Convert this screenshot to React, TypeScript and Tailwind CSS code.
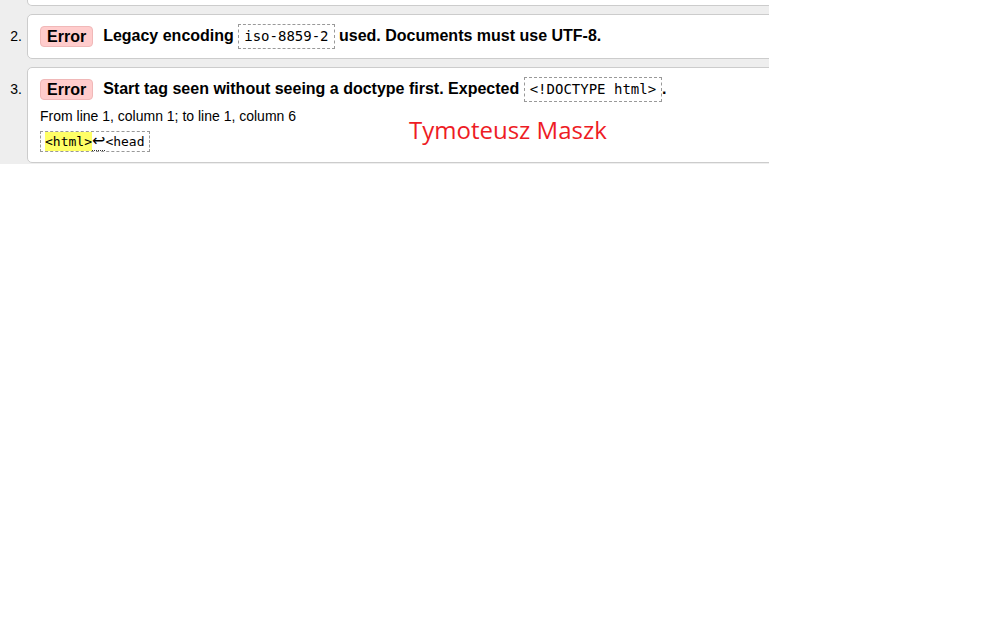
const sans = "font-['Liberation_Sans',Arial,sans-serif]";
const mono = "font-['DejaVu_Sans_Mono',monospace]";

function Badge() {
  return (
    <span className="inline-block rounded-[4px] border border-[#f0b8b8] bg-[#ffcccc] px-[6px] text-[16px] font-bold leading-[19px] text-black">
      Error
    </span>
  );
}

function Code({ children }: { children: React.ReactNode }) {
  return (
    <code
      className={`inline-block border border-dashed border-[#999] px-[5px] text-[14px] font-normal leading-[23px] text-black ${mono}`}
    >
      {children}
    </code>
  );
}

export default function App() {
  return (
    <div className={`relative h-[164px] w-[769px] overflow-hidden bg-[#eeeeee] ${sans}`}>
      <ol className="flex w-[900px] flex-col gap-[8px] text-black">
        <li className="flex">
          <span className="w-[27px] shrink-0" />
          <div className="h-[6px] flex-1 rounded-b-[5px] border border-t-0 border-[#cccccc] bg-white" />
        </li>

        <li className="flex">
          <span className="w-[27px] shrink-0 pr-[5px] pt-[12px] text-right text-[14px] leading-[20px]">2.</span>
          <div className="flex-1 rounded-[5px] border border-[#cccccc] bg-white pb-[9px] pl-3 pt-[9px]">
            <p className="flex h-[25px] items-center text-[16px] font-bold leading-[20px]">
              <Badge />
              <span className="ml-[10px] whitespace-pre">
                Legacy encoding <Code>iso-8859-2</Code> used. Documents must use UTF-8.
              </span>
            </p>
          </div>
        </li>

        <li className="flex">
          <span className="w-[27px] shrink-0 pr-[5px] pt-[12px] text-right text-[14px] leading-[20px]">3.</span>
          <div className="flex-1 rounded-[5px] border border-[#cccccc] bg-white pb-[10px] pl-3 pt-[9px]">
            <p className="flex h-[25px] items-center text-[16px] font-bold leading-[20px]">
              <Badge />
              <span className="ml-[10px] whitespace-pre">
                Start tag seen without seeing a doctype first. Expected <Code>&lt;!DOCTYPE html&gt;</Code>.
              </span>
            </p>
            <p className="mt-[4px] text-[14px] leading-[20px]">From line 1, column 1; to line 1, column 6</p>
            <div className="mt-[5px] flex">
              <code
                className={`inline-flex h-[21px] items-start border border-dashed border-[#999] px-[4px] text-[13px] leading-[19px] text-black ${mono}`}
              >
                <mark className="bg-[#ffff66] text-black">&lt;html&gt;</mark>
                <b
                  title="line break"
                  className="border-b border-dotted border-[#333] font-['DejaVu_Sans',sans-serif] text-[16px] font-normal leading-[18px]"
                >
                  ↩
                </b>
                <span>&lt;head</span>
              </code>
            </div>
          </div>
        </li>
      </ol>

      <span className="absolute left-[409px] top-[114px] font-['Open_Sans',sans-serif] text-[24px] leading-[32px] text-[#ee1c25]">
        Tymoteusz Maszk
      </span>
    </div>
  );
}
